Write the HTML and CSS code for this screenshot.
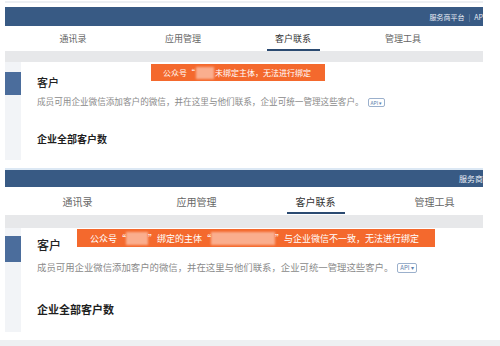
FILE: index.html
```html
<!DOCTYPE html>
<html lang="zh-CN">
<head>
  <meta charset="UTF-8" />
  <meta name="viewport" content="width=device-width, initial-scale=1.0" />
  <title>客户联系</title>
  <link rel="stylesheet" href="styles.css">
</head>
<body>
  <div class="edge"></div>

  <!-- ─── 截图 1 ─── -->
  <section class="shot shot-a">
    <div class="topbar">
      <span class="links">服务商平台<i class="sep">|</i>AP</span>
    </div>
    <nav class="tabs">
      <a class="tab">通讯录</a>
      <a class="tab">应用管理</a>
      <a class="tab active">客户联系</a>
      <a class="tab">管理工具</a>
    </nav>
    <div class="band"></div>
    <div class="content">
      <aside class="side"><div class="side-mark"></div></aside>
      <div class="main">
        <h2>客户</h2>
        <p class="desc">成员可用企业微信添加客户的微信，并在这里与他们联系，企业可统一管理这些客户。<span class="api">API ▾</span></p>
        <h3>企业全部客户数</h3>
      </div>
    </div>
    <div class="toast">公众号“<span class="blur b1"></span>未绑定主体，无法进行绑定</div>
  </section>

  <div class="seam"></div>

  <!-- ─── 截图 2 ─── -->
  <section class="shot shot-b">
    <div class="topbar">
      <span class="links">服务商</span>
    </div>
    <nav class="tabs">
      <a class="tab">通讯录</a>
      <a class="tab">应用管理</a>
      <a class="tab active">客户联系</a>
      <a class="tab">管理工具</a>
    </nav>
    <div class="band"></div>
    <div class="content">
      <aside class="side"><div class="side-mark"></div></aside>
      <div class="main">
        <h2>客户</h2>
        <p class="desc">成员可用企业微信添加客户的微信，并在这里与他们联系，企业可统一管理这些客户。<span class="api">API ▾</span></p>
        <h3>企业全部客户数</h3>
      </div>
    </div>
    <div class="toast">公众号“<span class="blur b2"></span>”绑定的主体“<span class="blur b3"></span>”与企业微信不一致，无法进行绑定</div>
  </section>

  <div class="floor"></div>
</body>
</html>
```

FILE: styles.css
```css
/* ─── 기본 ─── */
body {
  margin: 0;
  padding: 1px 0 0;
  background: #ffffff;
  font-family: "Noto Sans CJK SC", "Noto Sans", sans-serif;
  color: #222;
  width: 500px;
  height: 345px;
  overflow: hidden;
}

.edge {
  margin-left: 5px;
  width: 478px;
  height: 2px;
  background: #eceff3;
  margin-bottom: 4px;
}

/* 스크린샷 프레임 */
.shot {
  position: relative;
  margin-left: 5px;
  width: 478px;
}

/* 상단 파란 바 */
.topbar {
  display: flex;
  align-items: center;
  justify-content: flex-end;
  background: #385a84;
  overflow: hidden;
  white-space: nowrap;
}
.links {
  color: #e8eef6;
}
.sep {
  font-style: normal;
  color: #8aa2c2;
  margin: 0 4px;
}

/* 탭 */
.tabs {
  display: grid;
  background: #ffffff;
  padding-left: 13px;
}
.tab {
  position: relative;
  display: flex;
  justify-content: center;
  align-items: center;
  color: #666;
}
.tab.active {
  color: #333;
}
.tab.active::after {
  content: "";
  position: absolute;
  bottom: 0;
  left: 50%;
  height: 2px;
  background: #2b4a71;
}

.band {
  background: #e7e8ea;
}

/* 본문 */
.content {
  display: flex;
}
.side {
  width: 16px;
  background: #f2f4f7;
}
.side-mark {
  background: #4b6d9c;
}
.main {
  flex: 1;
  padding-left: 16px;
}
.main h2 {
  margin: 0;
  font-weight: 500;
  color: #222;
}
.main .desc {
  margin: 0;
  color: #8a8a8a;
  white-space: nowrap;
}
.api {
  display: inline-block;
  margin-left: 4px;
  border: 1px solid #9bb0cc;
  border-radius: 2px;
  color: #5d7fad;
  vertical-align: middle;
}
.main h3 {
  margin: 0;
  font-weight: 700;
  color: #1f1f1f;
}

/* 오렌지 토스트 */
.toast {
  position: absolute;
  display: flex;
  align-items: center;
  background: #f4692d;
  color: #ffffff;
  white-space: nowrap;
  overflow: hidden;
  box-sizing: border-box;
}
.blur {
  display: inline-block;
  background: rgba(255, 232, 222, 0.55);
  filter: blur(1px);
}

/* ─── 截图 1 치수 ─── */
.shot-a .topbar { height: 19px; font-size: 7px; }
.shot-a .tabs { grid-template-columns: repeat(4, 110px); height: 25px; font-size: 9px; }
.shot-a .tab.active::after { width: 53px; margin-left: -26px; }
.shot-a .band { height: 11px; }
.shot-a .content { height: 98px; }
.shot-a .side-mark { margin-top: 10px; height: 23px; }
.shot-a .main h2 { padding-top: 13px; font-size: 11px; line-height: 14px; }
.shot-a .desc { margin-top: 6px; font-size: 8.6px; line-height: 12px; }
.shot-a .api { font-size: 5px; line-height: 7px; padding: 0 2px; }
.shot-a .main h3 { margin-top: 25px; font-size: 10px; line-height: 14px; }
.shot-a .toast { top: 57px; left: 146px; width: 174px; height: 17px; padding-left: 12px; font-size: 8px; }
.shot-a .b1 { width: 18px; height: 12px; margin: 0 1px; }

.seam {
  margin-left: 5px;
  width: 478px;
  height: 8px;
  border-bottom: 2px solid #dce8f4;
}

/* ─── 截图 2 치수 ─── */
.shot-b .topbar { height: 17px; font-size: 8px; }
.shot-b .tabs { grid-template-columns: repeat(4, 119px); height: 28px; font-size: 10px; }
.shot-b .tab.active::after { width: 58px; margin-left: -29px; bottom: 1px; }
.shot-b .band { height: 13px; }
.shot-b .content { height: 104px; }
.shot-b .side-mark { margin-top: 8px; height: 26px; }
.shot-b .main h2 { padding-top: 9px; font-size: 12px; line-height: 16px; }
.shot-b .desc { margin-top: 8px; font-size: 9.4px; line-height: 13px; }
.shot-b .api { font-size: 6px; line-height: 8px; padding: 0 2px; }
.shot-b .main h3 { margin-top: 27px; font-size: 11px; line-height: 16px; }
.shot-b .toast { top: 59px; left: 72px; width: 358px; height: 18px; padding-left: 13px; font-size: 9px; }
.shot-b .b2 { width: 22px; height: 13px; }
.shot-b .b3 { width: 64px; height: 13px; }

.floor {
  margin-top: 8px;
  height: 10px;
  background: #eef0f2;
}
```
